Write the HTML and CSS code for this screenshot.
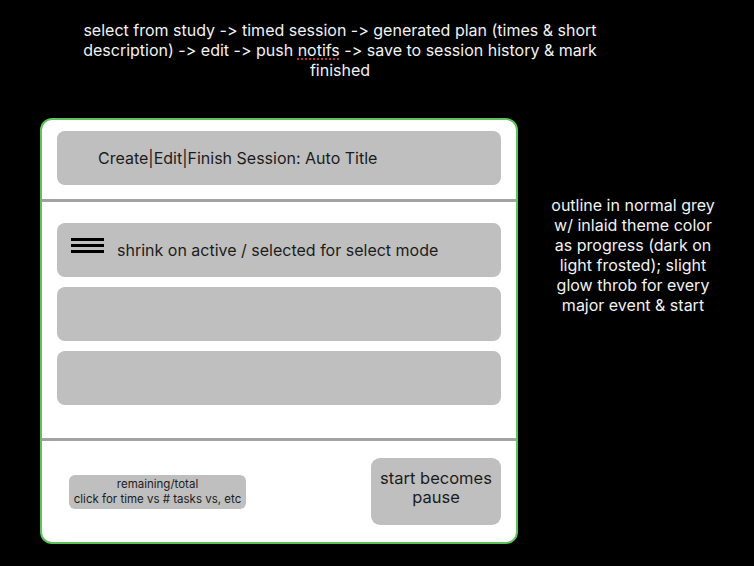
FILE: index.html
```html
<!DOCTYPE html>
<html lang="en">
<head>
    <meta charset="UTF-8">
    <title>Session Planner Sketch</title>
    <link rel="stylesheet" href="styles.css">
</head>
<body>

    <p class="flow-note">
        select from study -&gt; timed session -&gt; generated plan (times &amp; short description) -&gt; edit -&gt; push <span class="misspelled">notifs</span> -&gt; save to session history &amp; mark finished
    </p>

    <div class="board">
        <main class="session-card">
            <header class="session-header">
                <div class="title-bar">Create|Edit|Finish Session: Auto Title</div>
            </header>

            <section class="task-list">
                <div class="task-row">
                    <span class="drag-handle" aria-hidden="true"><i></i><i></i><i></i></span>
                    <span>shrink on active / selected for select mode</span>
                </div>
                <div class="task-row"></div>
                <div class="task-row"></div>
            </section>

            <footer class="session-footer">
                <button type="button" class="progress-pill">remaining/total<br>click for time vs # tasks vs, etc</button>
                <button type="button" class="start-button">start becomes pause</button>
            </footer>
        </main>

        <p class="side-note">
            outline in normal grey w/ inlaid theme color as progress (dark on light frosted); slight glow throb for every major event &amp; start
        </p>
    </div>

</body>
</html>
```

FILE: styles.css
```css
/* 1. Basic Reset & Font */
body, html {
    margin: 0;
    padding: 0;
    background-color: black;
    color: #f2f2f2;
    font-family: Inter, "Liberation Sans", Arial, sans-serif;
    font-feature-settings: "calt" 0, "liga" 0; /* keep -> and | as typed */
}

/* 2. Annotations */
.flow-note {
    width: 540px;
    margin: 0 0 0 70px;
    padding-top: 20px;
    font-size: 16px;
    line-height: 20px;
    text-align: center;
}

.misspelled {
    text-decoration: underline dotted #e0453a;
    text-underline-offset: 3px;
}

.board {
    display: flex;
    align-items: flex-start;
    margin-top: 38px;
    padding-left: 40px;
}

.side-note {
    width: 170px;
    margin: 77px 0 0 30px;
    font-size: 16px;
    line-height: 20px;
    text-align: center;
}

/* 3. Session Card */
.session-card {
    width: 478px;
    height: 426px;
    box-sizing: border-box;
    background-color: white;
    border: 2px solid #5cc25a;
    border-radius: 12px;
    display: flex;
    flex-direction: column;
    color: #1c1c1c;
}

.session-header {
    padding: 11px 15px 14px 15px;
    border-bottom: 3px solid #a3a3a3;
}

.title-bar {
    height: 54px;
    display: flex;
    align-items: center;
    padding-left: 41px;
    background-color: #bfbfbf;
    border-radius: 8px;
    font-size: 16px;
}

/* 4. Task Rows */
.task-list {
    display: flex;
    flex-direction: column;
    gap: 10px;
    padding: 21px 15px 33px 15px;
    border-bottom: 3px solid #a3a3a3;
}

.task-row {
    height: 54px;
    display: flex;
    align-items: center;
    gap: 13px;
    padding-left: 14px;
    background-color: #bfbfbf;
    border-radius: 8px;
    font-size: 16px;
}

.drag-handle {
    display: flex;
    flex-direction: column;
    gap: 3px;
    width: 33px;
    margin-bottom: 10px;
}

.drag-handle i {
    display: block;
    height: 3px;
    background-color: black;
}

/* 5. Footer Controls */
.session-footer {
    flex-grow: 1;
    display: flex;
    align-items: center;
    justify-content: space-between;
    padding: 0 15px 0 27px;
}

.progress-pill {
    width: 177px;
    height: 34px;
    padding: 0;
    border: none;
    border-radius: 6px;
    background-color: #bfbfbf;
    color: #1c1c1c;
    font-family: inherit;
    font-size: 11.5px;
    line-height: 15px;
}

.start-button {
    width: 130px;
    height: 67px;
    padding: 0 0 7px 0;
    border: none;
    border-radius: 9px;
    background-color: #bfbfbf;
    color: #1c1c1c;
    font-family: inherit;
    font-size: 16.5px;
    line-height: 19px;
}
```
